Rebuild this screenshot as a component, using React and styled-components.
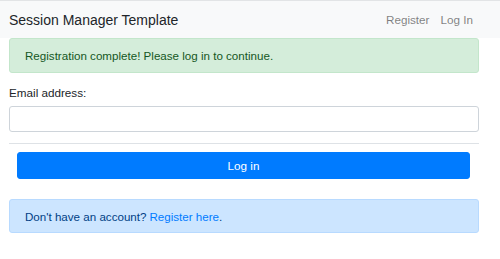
import React from 'react';
import styled, { createGlobalStyle } from 'styled-components';

const GlobalStyle = createGlobalStyle`
  body {
    margin: 0;
    background: #fff;
    font-family: "Liberation Sans", Arial, sans-serif;
    color: #212529;
  }
`;

// Top navigation bar
const NavBar = styled.nav`
  display: flex;
  align-items: center;
  justify-content: space-between;
  height: 37px;
  padding: 0 27px 0 9px;
  background: #f8f9fa;
  border-top: 1px solid #e2e4e6;
`;

const Brand = styled.span`
  font-size: 14px;
  color: #212529;
`;

const NavLinks = styled.div`
  display: flex;
  gap: 11px;
`;

const NavLink = styled.a`
  font-size: 11.7px;
  color: rgba(0, 0, 0, 0.5);
  text-decoration: none;
`;

const Container = styled.main`
  padding: 0 21px 0 9px;
`;

const Alert = styled.div`
  box-sizing: border-box;
  display: flex;
  align-items: center;
  height: ${props => props.h || 35}px;
  margin-top: ${props => props.mt || 0}px;
  padding: 0 15px;
  border-radius: 3px;
  font-size: 11.6px;
  background: ${props => props.variant === 'info' ? '#cce5ff' : '#d4edda'};
  border: 1px solid ${props => props.variant === 'info' ? '#b8daff' : '#c3e6cb'};
  color: ${props => props.variant === 'info' ? '#004085' : '#155724'};
`;

const AlertLink = styled.a`
  color: #007bff;
  text-decoration: none;
  margin-left: 3px;
`;

const Label = styled.label`
  display: block;
  margin-top: 11px;
  font-size: 11.7px;
  line-height: 18px;
`;

const Input = styled.input`
  display: block;
  box-sizing: border-box;
  width: 100%;
  height: 26px;
  margin-top: 4px;
  border: 1px solid #ced4da;
  border-radius: 3px;
  background: #fff;
`;

const Rule = styled.hr`
  margin: 11px 0 0;
  border: 0;
  border-top: 1px solid #dee2e6;
`;

const Button = styled.button`
  display: block;
  box-sizing: border-box;
  width: calc(100% - 17px);
  height: 27px;
  margin: 8px 0 0 8px;
  border: 1px solid #007bff;
  border-radius: 3px;
  background: #007bff;
  color: #fff;
  font-family: inherit;
  font-size: 11.7px;
`;

export default function App() {
  return (
    <>
      <GlobalStyle />
      <NavBar>
        <Brand>Session Manager Template</Brand>
        <NavLinks>
          <NavLink href="#">Register</NavLink>
          <NavLink href="#">Log In</NavLink>
        </NavLinks>
      </NavBar>
      <Container>
        <Alert>Registration complete! Please log in to continue.</Alert>
        <Label htmlFor="email">Email address:</Label>
        <Input id="email" type="email" />
        <Rule />
        <Button>Log in</Button>
        <Alert variant="info" mt={20} h={34}>
          Don't have an account?<AlertLink href="#">Register here</AlertLink>.
        </Alert>
      </Container>
    </>
  );
}
